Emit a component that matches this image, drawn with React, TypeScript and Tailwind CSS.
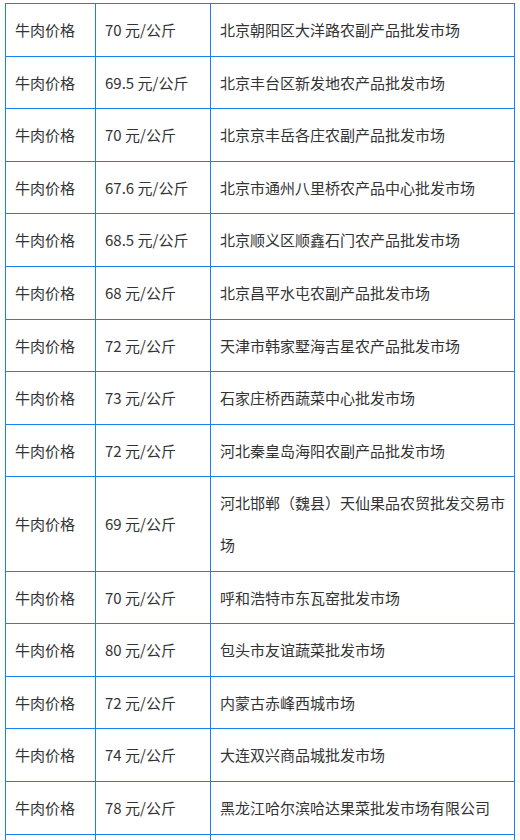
const rows: [string, string][] = [
  ['70 元/公斤', '北京朝阳区大洋路农副产品批发市场'],
  ['69.5 元/公斤', '北京丰台区新发地农产品批发市场'],
  ['70 元/公斤', '北京京丰岳各庄农副产品批发市场'],
  ['67.6 元/公斤', '北京市通州八里桥农产品中心批发市场'],
  ['68.5 元/公斤', '北京顺义区顺鑫石门农产品批发市场'],
  ['68 元/公斤', '北京昌平水屯农副产品批发市场'],
  ['72 元/公斤', '天津市韩家墅海吉星农产品批发市场'],
  ['73 元/公斤', '石家庄桥西蔬菜中心批发市场'],
  ['72 元/公斤', '河北秦皇岛海阳农副产品批发市场'],
  ['69 元/公斤', '河北邯郸（魏县）天仙果品农贸批发交易市场'],
  ['70 元/公斤', '呼和浩特市东瓦窑批发市场'],
  ['80 元/公斤', '包头市友谊蔬菜批发市场'],
  ['72 元/公斤', '内蒙古赤峰西城市场'],
  ['74 元/公斤', '大连双兴商品城批发市场'],
  ['78 元/公斤', '黑龙江哈尔滨哈达果菜批发市场有限公司'],
];

const cell = 'border border-[#1a80ee] py-[5px] pl-[9px] pr-[5px] align-middle';

export default function App() {
  return (
    <div className="h-[840px] overflow-hidden bg-white pl-[5px] pt-[3px]" style={{ fontFamily: '"Noto Sans CJK SC", "Noto Sans", sans-serif' }}>
      <table className="w-[509px] table-fixed border-collapse text-[15px] leading-[41.6px] text-[#333]">
        <colgroup>
          <col className="w-[90px]" />
          <col className="w-[115px]" />
          <col className="w-[304px]" />
        </colgroup>
        <tbody>
          {rows.map(([price, market], i) => (
            <tr key={i}>
              <td className={cell}>牛肉价格</td>
              <td className={cell}>{price}</td>
              <td className={cell}>{market}</td>
            </tr>
          ))}
          {/* next row starts at the bottom edge */}
          <tr>
            <td className={cell}>&nbsp;</td>
            <td className={cell}>&nbsp;</td>
            <td className={cell}>&nbsp;</td>
          </tr>
        </tbody>
      </table>
    </div>
  );
}
